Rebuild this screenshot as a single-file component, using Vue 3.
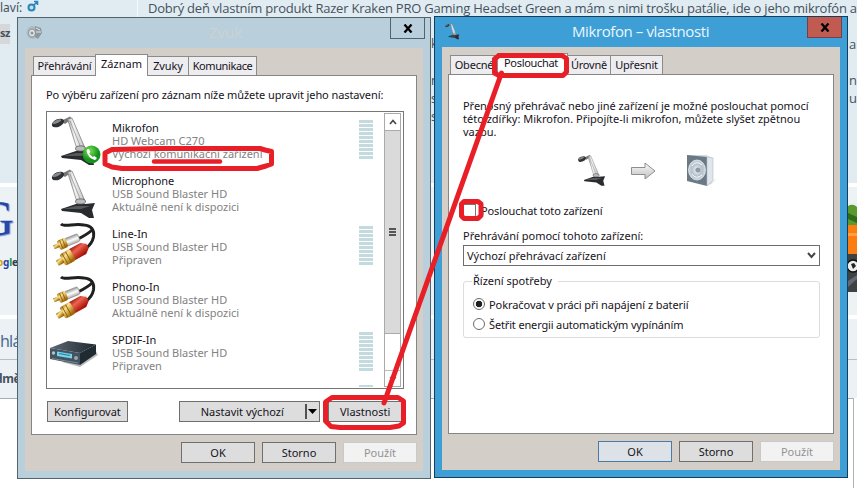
<script setup>
const devices = [
  { name: 'Mikrofon', hw: 'HD Webcam C270', state: 'Výchozí komunikační zařízení', icon: 'mic', meter: true, call: true },
  { name: 'Microphone', hw: 'USB Sound Blaster HD', state: 'Aktuálně není k dispozici', icon: 'mic' },
  { name: 'Line-In', hw: 'USB Sound Blaster HD', state: 'Připraven', icon: 'rca', meter: true },
  { name: 'Phono-In', hw: 'USB Sound Blaster HD', state: 'Aktuálně není k dispozici', icon: 'rca' },
  { name: 'SPDIF-In', hw: 'USB Sound Blaster HD', state: 'Připraven', icon: 'box', meter: true },
  { name: '', hw: '', state: '', icon: '', meter: true },
];
</script>

<template>
<div class="desktop">

  <!-- forum page behind the dialogs -->
  <div class="page">
    <div class="band top">
      <div class="side">
        <div class="sex">laví:
          <svg width="12" height="12" viewBox="0 0 12 12"><circle cx="4.5" cy="7.5" r="3" fill="#bfe0f0" stroke="#2a86b8" stroke-width="2"/><path d="M7 5L10 2M7 1.5h3.5V5" fill="none" stroke="#2a86b8" stroke-width="1.6"/></svg>
        </div>
        <div class="sz">sz</div>
      </div>
      <div class="post">Dobrý deň vlastním produkt Razer Kraken PRO Gaming Headset Green a mám s nimi trošku patálie, ide o jeho mikrofón a</div>
      <div class="edge"><p class="e1">an</p><p class="e2">ne</p><p class="e3">uc</p></div>
    </div>
    <div class="band mid">
      <div class="side google">
        <div class="bigg">G</div>
        <div class="ogle"><i class="y">o</i><i class="b">g</i><i class="g">l</i><i class="r">e</i></div>
      </div>
      <svg class="thumb" width="9" height="89" viewBox="0 0 9 89"><rect width="9" height="89" fill="#e8f0f0"/><path d="M0 3Q5 0 9 4V24H0z" fill="#5a9a2c"/><path d="M0 10L9 14V20L0 16z" fill="#2f6a1c"/><rect y="22" width="9" height="31" fill="#fb7d12"/><rect y="30" width="9" height="3" fill="#ffa040"/><rect y="51" width="9" height="38" fill="#3d4243"/><circle cx="5" cy="63" r="6" fill="#eee" stroke="#111" stroke-width="1.5"/><path d="M3 61l3-1 2 3-3 3z" fill="#222"/><path d="M0 78L9 72V76L0 84z" fill="#667"/></svg>
    </div>
    <div class="band low"><div class="hla">hlá</div><div class="dme">dmě</div></div>
    <div class="foot"></div>
  </div>
  <div class="gap"><span class="k1">k</span><span class="k2">n</span><span class="k3">s</span><span class="k4">s</span></div>

  <svg class="defs" width="0" height="0">
    <defs>
      <linearGradient id="arm" x1="0" y1=".4" x2="1" y2=".2"><stop offset="0" stop-color="#999"/><stop offset=".35" stop-color="#f4f4f4"/><stop offset=".7" stop-color="#d0d0d0"/><stop offset="1" stop-color="#777"/></linearGradient>
      <linearGradient id="gold" x1="0" y1="0" x2=".4" y2="1"><stop offset="0" stop-color="#8f6712"/><stop offset=".4" stop-color="#ffe18a"/><stop offset="1" stop-color="#a06a08"/></linearGradient>
      <linearGradient id="red" x1="0" y1="0" x2=".3" y2="1"><stop offset="0" stop-color="#9c1710"/><stop offset=".4" stop-color="#ed6450"/><stop offset="1" stop-color="#a81408"/></linearGradient>
      <linearGradient id="silver" x1="0" y1="0" x2="0" y2="1"><stop offset="0" stop-color="#999"/><stop offset=".5" stop-color="#fff"/><stop offset="1" stop-color="#aaa"/></linearGradient>
      <linearGradient id="deck" x1="0" x2="1"><stop offset="0" stop-color="#5d6872"/><stop offset="1" stop-color="#1f2931"/></linearGradient>
      <radialGradient id="green" cx=".4" cy=".3"><stop offset="0" stop-color="#7fe05a"/><stop offset="1" stop-color="#14921a"/></radialGradient>
      <linearGradient id="arrow" x1="0" y1="0" x2="0" y2="1"><stop offset="0" stop-color="#fafafa"/><stop offset="1" stop-color="#c0c0c0"/></linearGradient>
      <radialGradient id="cone"><stop offset="0" stop-color="#8496a4"/><stop offset=".25" stop-color="#dbe4ea"/><stop offset=".6" stop-color="#b4c0ca"/><stop offset="1" stop-color="#ccd6dd"/></radialGradient>
    </defs>
    <symbol id="mic" viewBox="0 0 48 52">
      <path d="M11 6L20 1.500L22 4L15 9z" fill="#777"/>
      <path d="M17.500 4L22 3L35 33L27 34z" fill="url(#arm)" stroke="#777" stroke-width=".7"/>
      <path d="M20 6L31 33" stroke="#8a8a8a" stroke-width=".7"/>
      <ellipse cx="8" cy="8" rx="6.500" ry="3.800" transform="rotate(-24 8 8)" fill="#303335"/>
      <ellipse cx="7" cy="6.600" rx="4.500" ry="1.500" transform="rotate(-24 7 6.600)" fill="#84898d"/>
      <path d="M11 41L26 36L35 36L45 35L42 42L44 50L39 50L31 45L12 43z" fill="#292c2e"/>
      <path d="M13 41L26 38L40 38L31 41z" fill="#55595c"/>
      <ellipse cx="30.500" cy="33.500" rx="5" ry="2.600" fill="#bbb" stroke="#555" stroke-width=".8"/>
    </symbol>
    <symbol id="rca" viewBox="0 0 48 52">
      <path d="M11 3Q13 5 21 4T34 4Q45 5 43.500 16Q42 23 36 27" fill="none" stroke="#1f2021" stroke-width="3"/>
      <path d="M42 9Q38 13 28 18" fill="none" stroke="#222" stroke-width="3"/>
      <g transform="rotate(-22 16 22)">
        <rect x="16" y="17.500" width="14" height="8" rx="1.500" fill="url(#silver)" stroke="#888" stroke-width=".6"/>
        <rect x="8" y="16.500" width="9" height="10" rx="2" fill="url(#gold)"/>
        <rect x="3" y="19.500" width="6" height="4" fill="url(#gold)"/>
        <path d="M11 17v9M14 17v9" stroke="#8a5d0d" stroke-width=".8"/>
      </g>
      <g transform="rotate(-29 22 34)">
        <path d="M22 27.500h13l5 3.500v5l-5 4H22z" fill="url(#red)"/>
        <rect x="11" y="27.500" width="12" height="13" rx="2.500" fill="url(#gold)"/>
        <rect x="5" y="31" width="7" height="6" rx="1" fill="url(#gold)"/>
        <path d="M14 28v12M18 28v12" stroke="#8a5d0d" stroke-width=".9"/>
      </g>
    </symbol>
    <symbol id="box" viewBox="0 0 48 52">
      <path d="M12 35L30 40L48 28L46 24z" fill="#b9bcbf"/>
      <path d="M0 21L18 14L46 17.500L30 26z" fill="url(#deck)"/>
      <path d="M0 21L30 26V38L0 32z" fill="#435360"/>
      <path d="M30 26L46 17.500V27L30 38z" fill="#202a31"/>
      <path d="M7 24.500L22 27V31.500L7 29z" fill="#77d3ec"/>
      <path d="M9 26.500L20 28.500" stroke="#237d9a" stroke-width="1.200"/>
      <circle cx="3.500" cy="26" r="1.700" fill="#b5c1c9"/><circle cx="26" cy="31" r="2" fill="#9aa7af"/>
      <path d="M2 31.500L28 36" stroke="#8998a2" stroke-width=".8"/>
    </symbol>
  </svg>

  <!-- Zvuk -->
  <div class="win sound">
    <div class="titlebar">
      <svg class="ticon" width="17" height="17" viewBox="0 0 17 17"><ellipse cx="6.500" cy="8.500" rx="6" ry="6.500" fill="#aeb9be"/><ellipse cx="6" cy="9" rx="3.500" ry="4" fill="#dce3e6" stroke="#8c979c"/><path d="M9 2L15 4L16 9L12 15L9 13z" fill="#8d989d"/><path d="M10 4l4 2M10 8l5 0" stroke="#e3eaed"/><circle cx="6" cy="9" r="1.500" fill="#8d989d"/></svg>
      <div class="title">Zvuk</div>
      <button class="close"><svg width="10" height="9" viewBox="0 0 10 9"><path d="M1.500 .5L8.500 8.500M8.500 .5L1.500 8.500" stroke="#000" stroke-width="2.300"/></svg></button>
    </div>
    <div class="client">
      <div class="tabs">
        <span class="tab t1">Přehrávání</span><span class="tab t2 on">Záznam</span><span class="tab t3">Zvuky</span><span class="tab t4">Komunikace</span>
      </div>
      <div class="panel">
        <p class="hint">Po výběru zařízení pro záznam níže můžete upravit jeho nastavení:</p>
        <div class="list">
          <div class="rows">
            <div v-for="(d, i) in devices" :key="i" class="row">
              <div class="icon">
                <svg width="48" height="52"><use v-if="d.icon" :href="'#' + d.icon" width="48" height="52"/></svg>
                <svg v-if="d.call" class="call" width="19" height="19" viewBox="0 0 19 19"><circle cx="9.500" cy="9.500" r="9" fill="url(#green)"/><path d="M4.500 5.500Q5.500 3.500 7 4.200L8.200 7L7.200 8.200Q8.500 10.800 10.800 12L12.200 11L14.800 12.800Q14.800 14.600 12.800 15Q6 13.500 4.500 5.500z" fill="#fff"/></svg>
              </div>
              <div class="text">
                <div class="name">{{ d.name }}</div>
                <div>{{ d.hw }}</div>
                <div>{{ d.state }}</div>
              </div>
              <div v-if="d.meter" class="meter"><i v-for="n in 10" :key="n"></i></div>
            </div>
          </div>
          <div class="scroll">
            <div class="up"><svg width="8" height="6" viewBox="0 0 8 6"><path d="M1 5L4 1.500L7 5" fill="none" stroke="#444" stroke-width="1.600"/></svg></div>
            <div class="bar"><i></i><i></i><i></i></div>
            <div class="track"></div>
            <div class="down"><svg width="8" height="6" viewBox="0 0 8 6"><path d="M1 1L4 4.500L7 1" fill="none" stroke="#777" stroke-width="1.300"/></svg></div>
          </div>
        </div>
        <div class="actions">
          <button class="btn conf">Konfigurovat</button>
          <button class="btn def"><span>Nastavit výchozí</span><svg width="13" height="15" viewBox="0 0 13 15"><path d="M1 0V15" stroke="#222" stroke-width="1.500"/><path d="M3 5h9L7.500 10z"/></svg></button>
          <button class="btn prop">Vlastnosti</button>
        </div>
      </div>
      <div class="footer"><button class="btn">OK</button><button class="btn">Storno</button><button class="btn off">Použít</button></div>
    </div>
  </div>

  <!-- Mikrofon - vlastnosti -->
  <div class="win props">
    <div class="titlebar">
      <svg class="ticon" width="17" height="17" viewBox="0 0 48 52"><use href="#mic" width="48" height="52"/></svg>
      <div class="title">Mikrofon – vlastnosti</div>
      <button class="close"><svg width="10" height="9" viewBox="0 0 10 9"><path d="M1.500 .5L8.500 8.500M8.500 .5L1.500 8.500" stroke="#000" stroke-width="2.300"/></svg></button>
    </div>
    <div class="client">
      <div class="tabs">
        <span class="tab p1">Obecné</span><span class="tab p2 on">Poslouchat</span><span class="tab p3">Úrovně</span><span class="tab p4">Upřesnit</span>
      </div>
      <div class="panel">
        <p class="info"><span class="l1">Přenosný přehrávač nebo jiné zařízení je možné poslouchat pomocí</span><br>této zdířky: Mikrofon. Připojíte-li mikrofon, můžete slyšet zpětnou<br>vazbu.</p>
        <div class="flow">
          <svg width="30" height="33" viewBox="0 0 48 52" preserveAspectRatio="none"><use href="#mic" width="48" height="52"/></svg>
          <svg class="arrow" width="25" height="18" viewBox="0 0 25 18"><path d="M.5 5.500H14V1L24 9L14 17V12.500H.5z" fill="url(#arrow)" stroke="#8e8e8e"/></svg>
          <svg class="spk" width="32" height="33" viewBox="0 0 32 33"><path d="M22 31L31 24L25 30z" fill="#ccc"/><path d="M1 1L20 1L27 4V26L21 32z" fill="#cfd9e1"/><path d="M1 1L21 3V32L1 27z" fill="#6b7986"/><path d="M21 3L27 4V26L21 32z" fill="#dfe6ec" stroke="#b5bfc8" stroke-width=".6"/><ellipse cx="11" cy="16" rx="8.500" ry="10" fill="url(#cone)" stroke="#dfe8ee" stroke-width=".8"/><circle cx="12" cy="16" r="2.500" fill="#8b9ba8"/><path d="M6 12Q10 6 16 11M6 20Q10 26 16 21" fill="none" stroke="#f4f8fa"/></svg>
        </div>
        <label class="check"><i></i><span>Poslouchat toto zařízení</span></label>
        <p class="via">Přehrávání pomocí tohoto zařízení:</p>
        <div class="combo"><span>Výchozí přehrávací zařízení</span><svg width="9" height="7" viewBox="0 0 9 7"><path d="M1 1L4.500 5L8 1" fill="none" stroke="#444" stroke-width="2"/></svg></div>
        <fieldset>
          <legend>Řízení spotřeby</legend>
          <label class="radio"><i class="sel"></i><span class="ra">Pokračovat v práci při napájení z baterií</span></label>
          <label class="radio"><i></i><span class="rb">Šetřit energii automatickým vypínáním</span></label>
        </fieldset>
      </div>
      <div class="footer"><button class="btn main">OK</button><button class="btn">Storno</button><button class="btn off">Použít</button></div>
    </div>
  </div>

  <!-- red marker strokes -->
  <svg class="marks" width="857" height="488" viewBox="0 0 857 488">
    <g fill="none" stroke="#e81f27" stroke-width="5" stroke-linejoin="round" stroke-linecap="round">
      <path d="M499 55.500H562L566.500 58.500V72L563 75.500H499L494.500 73V59z"/>
      <path d="M501.500 73L384 403"/>
      <path d="M332 397.500H398L403.500 401V423L399 426L390 427.500H340L331 426.500L325.500 421V402z"/>
      <path d="M112 149.500L160 148.500H260L265 150L271.500 151.500V164L266 166L257 168.500H122L112 167L105 164V153z"/>
      <path d="M154 161.500H220" stroke-width="4.500"/>
      <path d="M464 201.500H478L481 204V215.500L478 218.500H464L461.500 216V204z"/>
    </g>
  </svg>
</div>
</template>

<style>
body { margin: 0; overflow: hidden; }
</style>

<style scoped>
.desktop {
  position: relative;
  width: 857px;
  height: 488px;
  overflow: hidden;
  background: #fff;
  font: 11px/13px "Noto Sans", "Open Sans", sans-serif;
  color: #16131c;
}
.desktop * { box-sizing: border-box; }
p { margin: 0; }
i { font-style: normal; }
.defs { position: absolute; }

/* page behind */
.page { display: flex; flex-direction: column; height: 488px; color: #45535d; }
.band { display: flex; flex: none; overflow: hidden; }
.top { height: 183px; background: #e1ebf2; }
.side { width: 138px; flex: none; }
.top .side { border-right: 1px solid #f5f9fb; }
.sex { display: flex; gap: 5px; height: 17px; font-size: 12px; line-height: 16px; }
.sz { width: 10px; height: 20px; margin-top: 7px; background: #d5d7d9; font-weight: bold; line-height: 18px; letter-spacing: -.5px; }
.post { width: 711px; margin-left: 10px; flex: none; margin-right: -10px; white-space: nowrap; font: 13px/16px "Open Sans", sans-serif; letter-spacing: -.22px; }
.edge { width: 18px; flex: none; font: 13px/18px "Open Sans", sans-serif; }
.e1 { margin-top: 35px; }
.e2 { margin-top: 18px; }
.mid { height: 128px; margin-top: 4px; background: #edf2f5; justify-content: space-between; }
.bigg { margin: 3px 0 0 -22px; height: 56px; font: 50px/56px "Liberation Serif", serif; color: #2647a5; text-shadow: 1px 1px 1px #7c93cf; }
.ogle { margin: 8px 0 0 -3px; font-weight: bold; font-size: 10px; line-height: 16px; letter-spacing: -.2px; }
.y { color: #c9a800; }
.b { color: #1d45a8; }
.g { color: #16923a; }
.r { color: #303a50; }
.thumb { margin-top: 16px; }
.low { height: 79px; margin-top: 4px; background: #ecf1f5; flex-direction: column; }
.hla { height: 41px; border-bottom: 1px solid #b5bfc7; font-size: 16px; line-height: 44px; letter-spacing: -.8px; color: #4a6c96; }
.dme { margin-left: -5px; font-weight: bold; font-size: 12px; line-height: 38px; letter-spacing: -.4px; }
.foot { height: 90px; width: 854px; border-top: 1px solid #9fb0bb; border-right: 1px solid #aab3b8; background: #fff; }
.gap { position: absolute; left: 431px; top: 34px; width: 3px; height: 444px; display: flex; flex-direction: column; overflow: hidden; color: #45535d; font-size: 12px; }
.k1 { margin-top: 3px; }
.k2 { margin-top: 24px; }
.k3, .k4 { margin-top: 5px; }

/* windows */
.win { position: absolute; display: flex; flex-direction: column; border: 1px solid #52636d; background: #b9cfdb; }
.sound { left: 17px; top: 17px; width: 414px; height: 462px; padding: 0 7px 7px; }
.props { left: 434px; top: 16px; width: 414px; height: 462px; padding: 0 7px 7px; background: #3e9fd7; border-color: #153e5b; }
.titlebar { display: flex; height: 30px; flex: none; }
.ticon { margin-top: 6px; flex: none; }
.sound .ticon { margin-left: 1px; }
.props .ticon { margin-left: 2px; }
.title { flex: 1; text-align: center; font: 15px/29px "Open Sans", sans-serif; color: #ccd2d4; }
.props .title { color: #eaf6fd; padding-left: 13px; letter-spacing: -.4px; }
.sound .title { padding-left: 18px; }
.close { width: 35px; height: 21px; margin-right: -2px; padding: 0; border: 1px solid #52636d; border-top: 0; background: #b9cfdb; display: flex; align-items: center; justify-content: center; }
.props .close { background: #c15a50; border-color: #71404a; }
.client { flex: 1; background: #d3cfc8; padding: 7px 6px 0; display: flex; flex-direction: column; }
.tabs { display: flex; align-items: flex-end; height: 20px; padding-left: 2px; flex: none; }
.tab { height: 19px; border: 1px solid #8b8b8b; border-bottom: 0; border-left: 0; background: #edecef; text-align: center; line-height: 18px; white-space: nowrap; }
.tab:first-child { border-left: 1px solid #8b8b8b; }
.tab.on { height: 22px; margin-bottom: -1px; background: #fff; z-index: 1; border-left: 1px solid #8b8b8b; margin-left: -1px; line-height: 18px; }
.t1 { width: 63px; letter-spacing: -.2px; }
.t2 { width: 53px; }
.t3 { width: 41px; letter-spacing: -.1px; }
.t4 { width: 68px; letter-spacing: -.4px; }
.p1 { width: 48px; letter-spacing: -.2px; }
.p2 { width: 71px; letter-spacing: -.3px; padding-right: 3px; }
.p3 { width: 43px; letter-spacing: -.2px; }
.p4 { width: 52px; letter-spacing: -.2px; }
.panel { width: 386px; height: 360px; flex: none; border: 1px solid #858585; background: #fff; padding: 0 14px; }
.hint { padding-top: 12px; height: 35px; white-space: nowrap; letter-spacing: -.09px; }
.list { width: 358px; height: 278px; border: 1px solid #777; display: flex; overflow: hidden; padding: 1px 2px; justify-content: space-between; }
.rows { width: 328px; height: 274px; overflow: hidden; }
.row { display: flex; height: 53px; padding-left: 1px; }
.icon { position: relative; width: 48px; height: 52px; margin-top: 2px; }
.icon svg { display: block; }
.call { position: absolute; left: 32px; top: 30px; }
.text { margin-left: 14px; padding-top: 8px; width: 200px; color: #828282; white-space: nowrap; }
.name { color: #16131c; }
.meter { margin-left: 47px; padding-top: 7px; width: 14px; display: flex; flex-direction: column; gap: 1px; }
.meter i { height: 3px; flex: none; background: #c3dade; }
.scroll { width: 17px; height: 274px; display: flex; flex-direction: column; border: 1px solid #aaa; }
.up, .down { height: 16px; flex: none; display: flex; align-items: center; justify-content: center; background: #fff; }
.bar { height: 204px; flex: none; border: 1px solid #aaa; border-width: 1px 0; background: #dadada; display: flex; flex-direction: column; align-items: center; justify-content: center; gap: 1px; }
.bar i { width: 7px; height: 2px; background: #555; }
.track { flex: 1; }
.down { border-top: 1px solid #bbb; }
.actions { display: flex; padding: 12px 0 0 1px; }
.btn { width: 74px; height: 21px; padding: 0 0 1px; border: 1px solid #6f6f6f; background: #dddddd; font: inherit; color: inherit; text-align: center; white-space: nowrap; }
.conf { width: 81px; }
.def { width: 142px; margin-left: 51px; display: flex; align-items: center; justify-content: space-between; padding: 0 1px 0 21px; }
.prop { width: 74px; margin-left: 8px; }
.footer { display: flex; gap: 7px; justify-content: flex-end; padding-top: 7px; }
.off { background: #f2f2f2; border-color: #c9c9c9; color: #929292; }
.main { border-color: #4b7ba4; background: #dce2e8; }

.info { padding-top: 24px; height: 79px; white-space: nowrap; }
.l1 { letter-spacing: -.03px; }
.flow { display: flex; padding-left: 114px; height: 34px; }
.arrow { margin: 8px 0 0 24px; }
.spk { margin: 0 0 0 30px; }
.check { display: flex; align-items: center; gap: 5px; margin-top: 15px; height: 14px; letter-spacing: -.1px; }
.check i { width: 13px; height: 13px; border: 1px solid #777; }
.via { padding-top: 12px; height: 28px; white-space: nowrap; }
.combo { width: 357px; height: 21px; border: 1px solid #6d6d6d; display: flex; align-items: center; justify-content: space-between; padding: 0 3px; }
fieldset { width: 357px; height: 64px; margin: 8px 0 0; padding: 0 0 0 9px; border: 1px solid #dcdcdc; border-radius: 3px; }
legend { padding: 0 6px 0 1px; margin-left: -1px; height: 14px; line-height: 14px; }
.radio { display: flex; align-items: center; gap: 4px; height: 20px; white-space: nowrap; }
.radio:nth-of-type(1) { margin-top: 6px; }
.radio i { width: 12px; height: 12px; border: 1px solid #6a6a6a; border-radius: 50%; background: #fff; }
.radio .sel { background: radial-gradient(circle, #222 0 3px, #fff 3.600px); }
.ra { letter-spacing: -.07px; }
.rb { letter-spacing: -.15px; }
.marks { position: absolute; left: 0; top: 0; z-index: 5; }
</style>
